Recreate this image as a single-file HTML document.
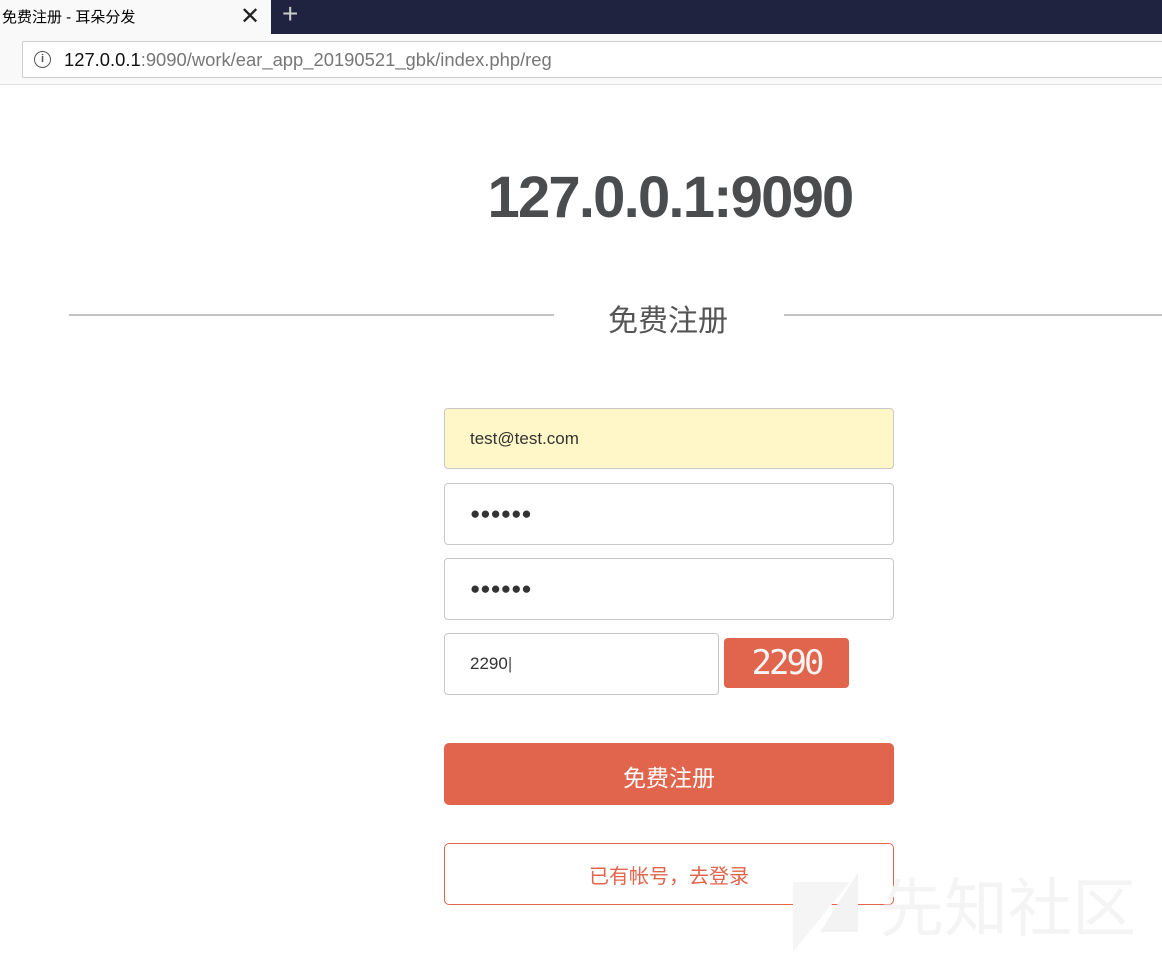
<!DOCTYPE html>
<html><head><meta charset="utf-8"><style>
*{box-sizing:border-box;margin:0;padding:0}
body{width:1162px;height:961px;overflow:hidden;background:#fff;font-family:"Liberation Sans","Noto Sans CJK SC",sans-serif;position:relative}
.abs{position:absolute}
.tabbar{left:0;top:0;width:1162px;height:34px;background:#20233f}
.tab{left:0;top:0;width:271px;height:34px;background:#f9f9fa;font-size:15px;color:#000;padding:6px 0 0 2px}
.inp{position:absolute;left:444px;width:450px;height:62px;border:1px solid #c8c8c8;border-radius:4px;font-size:17px;color:#333;padding-left:25px;line-height:60px}
</style></head><body>
<div class="abs tabbar"></div>
<div class="abs tab">免费注册 - 耳朵分发</div>
<div class="abs" style="left:240px;top:2px;font-size:24px;color:#222">✕</div>
<div class="abs" style="left:282px;top:-2px;font-size:28px;color:#ccc">+</div>
<div class="abs" style="left:0;top:34px;width:1162px;height:51px;background:#f9f9fa;border-bottom:1px solid #ddd"></div>
<div class="abs" style="left:22px;top:41px;width:1150px;height:37px;background:#fff;border:1px solid #ccc;border-radius:2px"></div>
<div class="abs" style="left:34px;top:51px;width:17px;height:17px;border:1.5px solid #555;border-radius:50%;font-size:11px;text-align:center;line-height:14px;color:#555;font-weight:bold">i</div>
<div class="abs" style="left:64px;top:49px;font-size:18.4px;color:#777"><span style="color:#111">127.0.0.1</span>:9090/work/ear_app_20190521_gbk/index.php/reg</div>
<div class="abs" style="left:0;top:164px;width:1340px;text-align:center;font-size:58px;font-weight:bold;color:#4a4c4e;letter-spacing:-1.8px">127.0.0.1:9090</div>
<div class="abs" style="left:69px;top:314px;width:485px;height:2px;background:#c4c4c4"></div>
<div class="abs" style="left:784px;top:314px;width:378px;height:2px;background:#c4c4c4"></div>
<div class="abs" style="left:608px;top:296px;font-size:30px;color:#555">免费注册</div>
<div class="inp" style="top:408px;background:#fff7c8;height:61px">test@test.com</div>
<div class="inp" style="top:483px;font-size:17px">●●●●●●</div>
<div class="inp" style="top:558px;font-size:17px">●●●●●●</div>
<div class="inp" style="top:633px;width:275px">2290<span style="font-weight:100;color:#555">|</span></div>
<div class="abs" style="left:724px;top:638px;width:125px;height:50px;background:#e1654d;border-radius:4px;color:#f4f4f4;font-size:34px;text-align:center;line-height:50px;font-family:'DejaVu Sans Mono',monospace;letter-spacing:-3px">2290</div>
<div class="abs" style="left:444px;top:743px;width:450px;height:62px;background:#e1654d;border-radius:5px;color:#fff;font-size:23px;text-align:center;line-height:70px">免费注册</div>
<div class="abs" style="left:444px;top:843px;width:450px;height:62px;border:1px solid #e1654d;border-radius:5px;color:#e1654d;font-size:20px;text-align:center;line-height:66px">已有帐号，去登录</div>
<div class="abs" style="left:880px;top:874px;font-size:64px;color:#f4f4f4;line-height:70px">先知社区</div>
<svg class="abs" style="left:790px;top:872px" width="70" height="80"><polygon points="3,10 60,10 3,80" fill="#f5f5f5"/><polygon points="30,60 68,0 68,60" fill="#f3f3f3"/></svg>
</body></html>
